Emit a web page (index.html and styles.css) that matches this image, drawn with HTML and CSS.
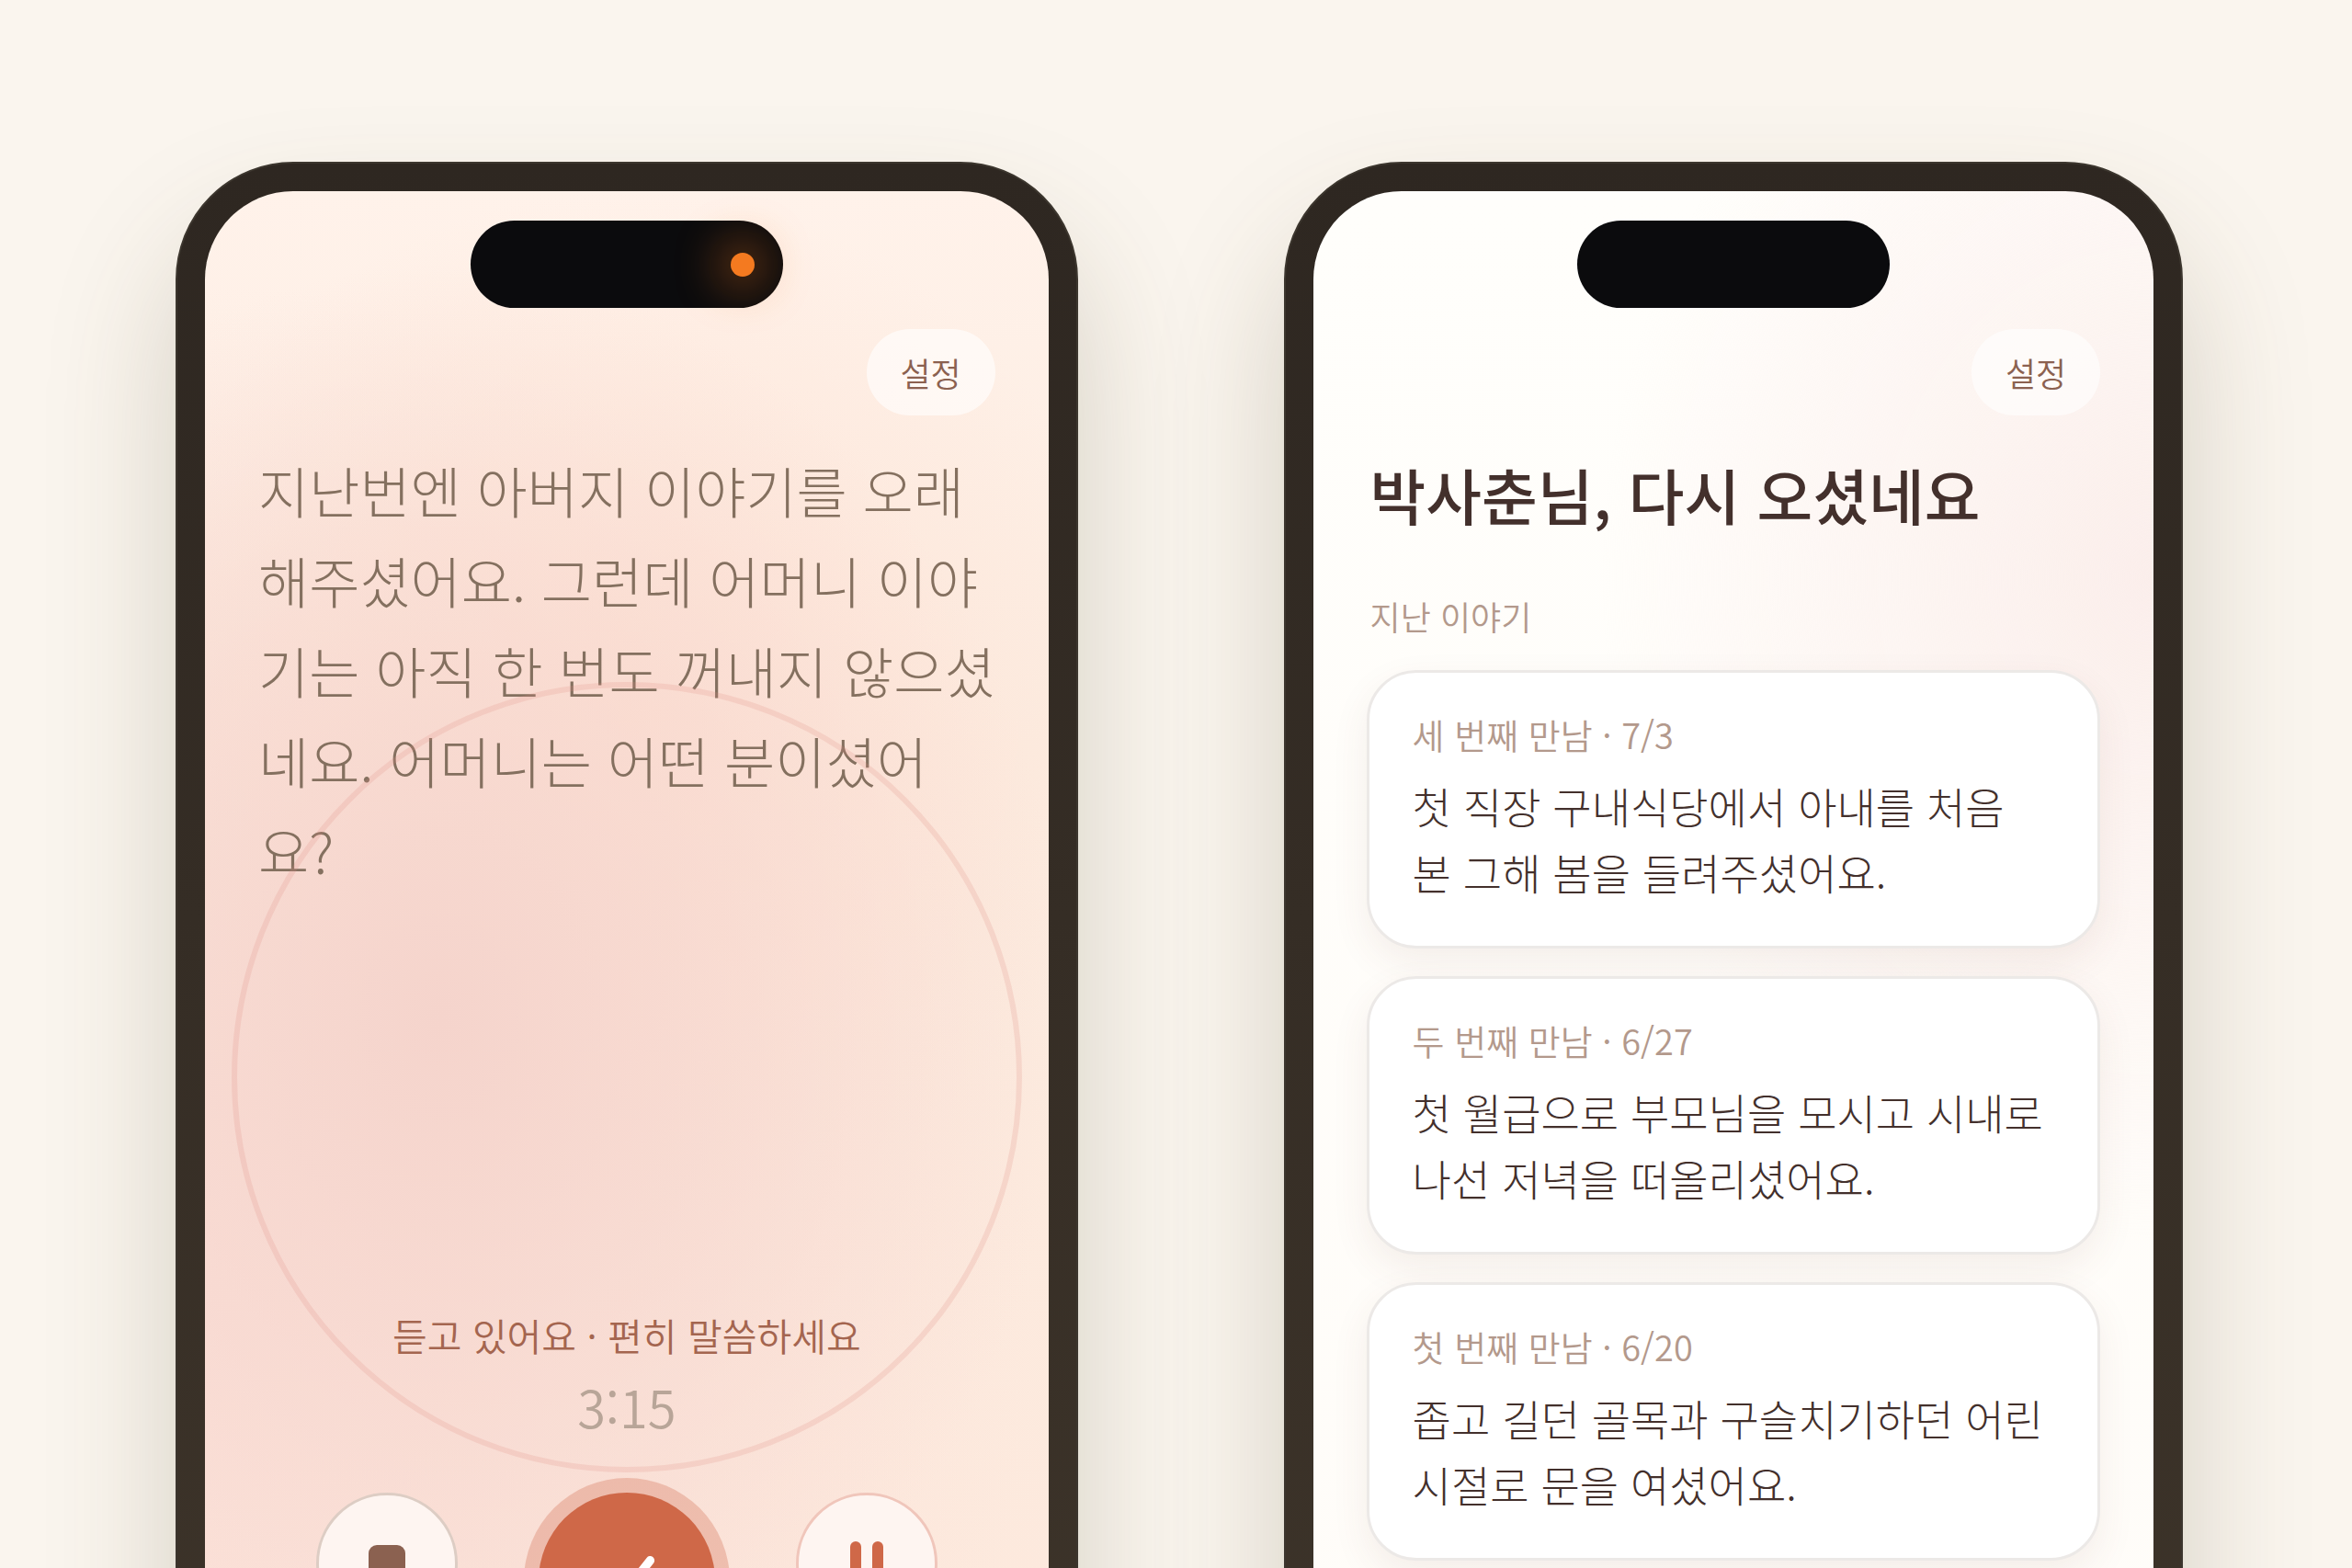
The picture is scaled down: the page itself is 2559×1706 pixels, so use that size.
FILE: index.html
```html
<!DOCTYPE html>
<html lang="ko">
<head>
    <meta charset="UTF-8">
    <meta name="viewport" content="width=device-width, initial-scale=1.0">
    <title>이야기</title>
    <link rel="stylesheet" href="styles.css">
</head>
<body>
    <main class="stage">
        <!-- Recording screen -->
        <section class="phone">
            <div class="screen screen-talk">
                <div class="island"><span class="mic-dot"></span></div>
                <div class="ring"></div>
                <header class="topbar">
                    <button type="button" class="settings">설정</button>
                </header>
                <p class="question">지난번엔 아버지 이야기를 오래<br>해주셨어요. 그런데 어머니 이야<br>기는 아직 한 번도 꺼내지 않으셨<br>네요. 어머니는 어떤 분이셨어<br>요?</p>
                <p class="status">듣고 있어요 · 편히 말씀하세요</p>
                <p class="timer">3:15</p>
                <div class="controls">
                    <button type="button" class="round stop" aria-label="그만하기">
                        <svg width="40" height="40" viewBox="0 0 40 40"><rect width="40" height="40" rx="9" fill="#8b6150"/></svg>
                    </button>
                    <button type="button" class="round done" aria-label="다 말했어요">
                        <svg width="76" height="76" viewBox="0 0 24 24" fill="none" stroke="#fff" stroke-width="3" stroke-linecap="round" stroke-linejoin="round"><path d="M20 5L9 19l-5-5"/></svg>
                    </button>
                    <button type="button" class="round pause" aria-label="잠시 멈춤">
                        <svg width="36" height="48" viewBox="0 0 36 48" fill="#cf6848"><rect width="12" height="48" rx="6"/><rect x="24" width="12" height="48" rx="6"/></svg>
                    </button>
                </div>
            </div>
        </section>

        <!-- Home screen -->
        <section class="phone">
            <div class="screen screen-home">
                <div class="island"></div>
                <header class="topbar">
                    <button type="button" class="settings">설정</button>
                </header>
                <h1 class="greeting">박사춘님, 다시 오셨네요</h1>
                <h2 class="list-title">지난 이야기</h2>
                <div class="cards">
                    <article class="card">
                        <p class="card-meta">세 번째 만남 · 7/3</p>
                        <p class="card-text">첫 직장 구내식당에서 아내를 처음<br>본 그해 봄을 들려주셨어요.</p>
                    </article>
                    <article class="card">
                        <p class="card-meta">두 번째 만남 · 6/27</p>
                        <p class="card-text">첫 월급으로 부모님을 모시고 시내로<br>나선 저녁을 떠올리셨어요.</p>
                    </article>
                    <article class="card">
                        <p class="card-meta">첫 번째 만남 · 6/20</p>
                        <p class="card-text">좁고 길던 골목과 구슬치기하던 어린<br>시절로 문을 여셨어요.</p>
                    </article>
                </div>
            </div>
        </section>
    </main>
</body>
</html>
```
FILE: styles.css
```css
* {
    box-sizing: border-box;
}
body {
    margin: 0;
    height: 100vh;
    overflow: hidden;
    background-color: #faf5ee;
    font-family: "Noto Sans CJK KR", sans-serif;
    font-weight: 350;
    color: #43302c;
}
h1, h2, p {
    margin: 0;
}
.stage {
    display: flex;
    gap: 224px;
    padding: 176px 184px 0 191px;
}

/* Phone frame */
.phone {
    flex: 1;
    padding: 30px;
    border: 2px solid #3c362e;
    border-radius: 128px;
    background: linear-gradient(#2e2721, #3c3329 80%);
    box-shadow: 0 80px 140px rgba(84, 76, 46, 0.22);
}
.screen {
    position: relative;
    min-height: 1986px;
    padding: 150px 58px 58px;
    border-radius: 96px;
    overflow: hidden;
}
.screen-talk {
    background:
        radial-gradient(680px 820px at 28% 900px, #f5d4cc, rgba(245, 212, 204, 0)),
        radial-gradient(560px 560px at 50% 560px, rgba(255, 224, 210, 0.7), rgba(255, 224, 210, 0)),
        radial-gradient(900px 1100px at 0 1200px, #fbe0d8, rgba(251, 224, 216, 0)),
        linear-gradient(#fff2ea, #fcebdf 600px, #fde8dc);
}
.screen-home {
    background:
        radial-gradient(600px 720px at 100% 420px, #fbeeeb, rgba(251, 238, 235, 0)),
        linear-gradient(#fffefb, #fffcf8);
}
.island {
    position: absolute;
    top: 32px;
    left: 50%;
    width: 340px;
    height: 95px;
    margin-left: -170px;
    border-radius: 48px;
    background-color: #0b0b0d;
    display: flex;
    align-items: center;
    justify-content: flex-end;
    padding-right: 31px;
}
.mic-dot {
    width: 26px;
    height: 26px;
    border-radius: 50%;
    background-color: #f47a20;
    box-shadow: 0 0 48px 14px rgba(244, 122, 32, 0.4);
}
.topbar {
    display: flex;
    justify-content: flex-end;
}
.settings {
    width: 140px;
    height: 94px;
    border: none;
    border-radius: 47px;
    background-color: rgba(255, 255, 255, 0.6);
    color: #8b6150;
    font: inherit;
    font-size: 36px;
    cursor: pointer;
}

/* Recording screen */
.ring {
    position: absolute;
    top: 534px;
    left: 29px;
    right: 29px;
    aspect-ratio: 1;
    border: 6px solid rgba(226, 140, 130, 0.2);
    border-radius: 50%;
}
.question {
    min-height: 940px;
    margin-top: 32px;
    color: #84705f;
    font-size: 60px;
    font-weight: 300;
    line-height: 98px;
    white-space: nowrap;
}
.status {
    color: #a4654f;
    font-size: 41px;
    line-height: 56px;
    text-align: center;
}
.timer {
    margin-top: 14px;
    color: #b8a598;
    font-size: 56px;
    line-height: 72px;
    text-align: center;
}
.controls {
    display: flex;
    align-items: flex-start;
    justify-content: center;
    gap: 88px;
    margin-top: 58px;
}
.round {
    display: flex;
    align-items: center;
    justify-content: center;
    width: 154px;
    height: 154px;
    padding: 0;
    border: 3px solid #ddcdc4;
    border-radius: 50%;
    background-color: #fef5f1;
    cursor: pointer;
}
.pause {
    border-color: #f0c6bb;
}
.done {
    width: 192px;
    height: 192px;
    border: none;
    background-color: #cf6848;
    box-shadow: 0 0 0 16px rgba(207, 104, 72, 0.3);
}

/* Home screen */
.greeting {
    margin-top: 41px;
    padding-left: 4px;
    font-size: 66px;
    font-weight: 500;
    line-height: 88px;
    white-space: nowrap;
}
.list-title {
    margin-top: 64px;
    padding-left: 4px;
    color: #b3998c;
    font-size: 36px;
    font-weight: 350;
    line-height: 50px;
}
.cards {
    display: flex;
    flex-direction: column;
    gap: 30px;
    margin-top: 34px;
}
.card {
    padding: 40px 47px 45px;
    border: 3px solid #ece9e7;
    border-radius: 54px;
    background-color: #fff;
    box-shadow: 0 16px 40px rgba(110, 70, 50, 0.08);
}
.card-meta {
    color: #b3998c;
    font-size: 38px;
    line-height: 54px;
}
.card-text {
    margin-top: 14px;
    font-size: 46px;
    font-weight: 300;
    line-height: 72px;
    white-space: nowrap;
}
```
